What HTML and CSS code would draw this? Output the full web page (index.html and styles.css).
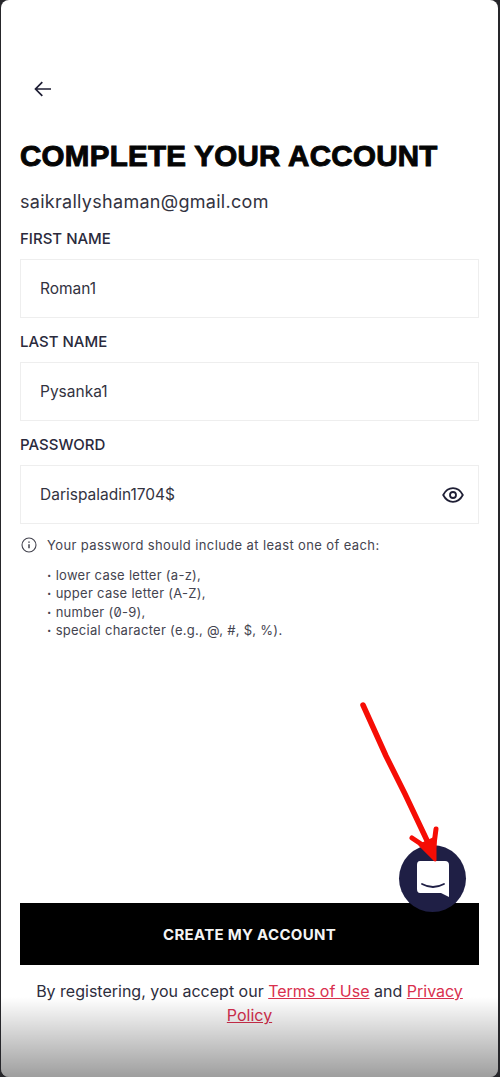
FILE: index.html
```html
<!DOCTYPE html>
<html lang="en">
<head>
<meta charset="utf-8">
<title>Complete your account</title>
<link rel="stylesheet" href="styles.css">
</head>
<body>
<main class="screen">
  <button class="back" aria-label="Back">
    <svg width="18" height="16" viewBox="0 0 18 16" fill="none" stroke="#1f1f35" stroke-width="1.7"><path d="M17 8H1.500M8.300 1.200 1.500 8l6.800 6.800"/></svg>
  </button>
  <h1 class="title">COMPLETE YOUR ACCOUNT</h1>
  <p class="email">saikrallyshaman@gmail.com</p>

  <label class="label">FIRST NAME</label>
  <div class="field">Roman1</div>
  <label class="label">LAST NAME</label>
  <div class="field">Pysanka1</div>
  <label class="label">PASSWORD</label>
  <div class="field">
    <span>Darispaladin1704$</span>
    <svg class="eye" width="22" height="16" viewBox="0 0 22 16" fill="none" stroke="#1f1f35" stroke-width="1.8"><path d="M1.200 8C3.500 3.600 6.800 1.200 11 1.200S18.500 3.600 20.800 8C18.500 12.400 15.200 14.800 11 14.800S3.500 12.400 1.200 8Z"/><circle cx="11" cy="8" r="3"/></svg>
  </div>

  <div class="hint">
    <svg width="16" height="16" viewBox="0 0 16 16" fill="none" stroke="#44444f" stroke-width="1.100"><circle cx="8" cy="8" r="7"/><path d="M8 7.200v4M8 4.400v1.300" stroke-width="1.500"/></svg>
    <span>Your password should include at least one of each:</span>
  </div>
  <ul class="rules">
    <li>lower case letter (a-z),</li>
    <li>upper case letter (A-Z),</li>
    <li>number (0-9),</li>
    <li>special character (e.g., @, #, $, %).</li>
  </ul>

  <div class="spacer"></div>

  <button class="submit">CREATE MY ACCOUNT</button>
  <p class="terms">By registering, you accept our <a href="#">Terms of Use</a> and <a href="#">Privacy Policy</a></p>

  <div class="fade"></div>

  <svg class="scribble" width="90" height="170" viewBox="0 0 90 170" fill="none" stroke="#f60d05" stroke-linecap="round" stroke-linejoin="round"><path d="M3 3 26 54 45 92 72 149" stroke-width="5.500"/><path d="M52 136 73 150M76 127 73 150" stroke-width="5"/><path d="M60 143 75 136 75 158Z" fill="#f60d05" stroke-width="3"/></svg>

  <button class="chat" aria-label="Open chat">
    <svg width="34" height="38" viewBox="0 0 34 38" fill="none"><path d="M4 1H29Q33 1 33 5V37L25 33H4Q1 33 1 29V5Q1 1 4 1Z" fill="#fff"/><path d="M6 24Q17 30 28 24" stroke="#1f1f45" stroke-width="1.800" stroke-linecap="round"/></svg>
  </button>
</main>
</body>
</html>
```
FILE: styles.css
```css
* { box-sizing: border-box; }
html, body { margin: 0; height: 100%; background: #26262a; }
body { font-family: Inter, "Liberation Sans", sans-serif; color: #2b2b3a; }

.screen {
  position: relative;
  width: 497px;
  height: 1077px;
  margin-left: 1px;
  padding: 0 19px;
  display: flex;
  flex-direction: column;
  overflow: hidden;
  background: #fff;
  border-radius: 8px;
}

.back {
  align-self: flex-start;
  margin: 81px 0 0 14px;
  padding: 0;
  height: 16px;
  border: 0;
  background: none;
  display: flex;
}

.title {
  margin: 41px 0 0;
  font: 700 29.500px/36px "Liberation Sans", Arial, sans-serif;
  color: #050505;
  letter-spacing: .3px;
  -webkit-text-stroke: 1px #050505;
  white-space: nowrap;
}

.email {
  margin: 16px 0 0;
  font-size: 18px;
  line-height: 24px;
  letter-spacing: .29px;
  color: #33333f;
}

.label {
  display: block;
  margin-top: 15px;
  font-size: 15px;
  line-height: 20px;
  font-weight: 500;
  color: #2a2a3c;
}
.label ~ .label { margin-top: 14px; }

.field {
  margin-top: 10px;
  width: 459px;
  height: 59px;
  padding: 0 14px 0 19px;
  display: flex;
  align-items: center;
  justify-content: space-between;
  border: 1.500px solid #eeeeee;
  font-size: 15.500px;
  color: #33333f;
}
.eye { flex: none; }

.hint {
  margin-top: 12px;
  display: flex;
  align-items: center;
  gap: 10px;
  height: 18px;
  margin-left: 1px;
  font-size: 13px;
  letter-spacing: .38px;
  color: #44444f;
}

.rules {
  list-style: none;
  margin: 12px 0 0;
  padding: 0 0 0 27px;
  font-size: 13px;
  line-height: 18.300px;
  letter-spacing: .28px;
  color: #44444f;
  font-feature-settings: "zero";
}
.rules li::before { content: "·"; font-weight: 700; margin-right: 4px; }

.spacer { flex: 1; }

.submit {
  width: 459px;
  height: 62px;
  border: 0;
  background: #000;
  color: #f4f4f4;
  font: 700 15px Inter, "Liberation Sans", sans-serif;
  letter-spacing: .3px;
}

.terms {
  margin: 14px 0 50px;
  text-align: center;
  font-size: 16px;
  line-height: 24px;
  color: #2d2d3d;
}
.terms a { color: #d9304e; }

.fade {
  position: absolute;
  left: 0;
  right: 0;
  bottom: 0;
  height: 80px;
  background: linear-gradient(rgba(0,0,0,0), rgba(0,0,0,.38));
  pointer-events: none;
}

.scribble {
  position: absolute;
  left: 359px;
  top: 702px;
  z-index: 2;
}

.chat {
  position: absolute;
  left: 398px;
  top: 845px;
  width: 67px;
  height: 67px;
  padding: 0;
  border: 0;
  border-radius: 50%;
  background: #1f1f45;
  display: flex;
  align-items: center;
  justify-content: center;
  padding-left: 1px;
}
```
